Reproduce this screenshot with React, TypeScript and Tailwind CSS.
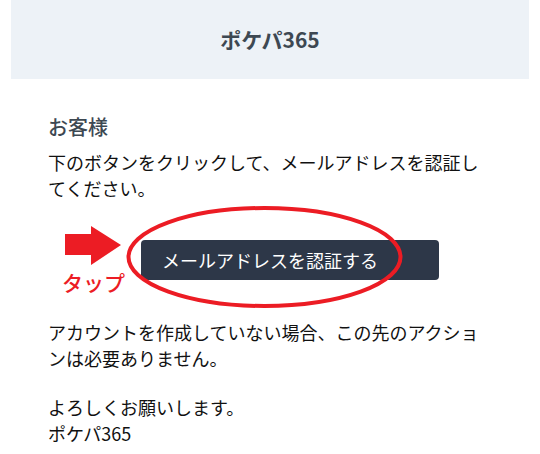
// App.tsx — email verification mail preview with red "tap" annotation.
const FONT = { fontFamily: '"Noto Sans CJK JP", "Noto Sans", sans-serif' };

function TapMark() {
  return (
    <>
      <svg className="absolute left-0 top-0 pointer-events-none" width={540} height={454}>
        <polygon points="65,234 91,234 91,226 121,245 91,265 91,255 65,255" fill="#ec1c24" />
        <ellipse cx={264.5} cy={257} rx={136} ry={49} fill="none" stroke="#ec1c24" strokeWidth={4} />
      </svg>
      <span className="absolute left-[62px] top-[268px] text-[21px] font-medium leading-[28px] text-[#ec1c24]">
        タップ
      </span>
    </>
  );
}

export default function App() {
  return (
    <div className="relative h-[454px] w-[540px] overflow-hidden bg-white" style={FONT}>
      <header className="mx-[11px] flex h-[79px] items-center justify-center bg-[#edf2f7]">
        <h1 className="text-[21px] font-bold text-[#3d4852]">ポケパ365</h1>
      </header>

      <main className="px-[48px] pt-[34px]">
        <h2 className="text-[20px] font-medium leading-[28px] text-[#3d4852]">お客様</h2>
        <p className="mt-[8px] text-[18px] leading-[26px] text-[#111]">
          下のボタンをクリックして、メールアドレスを認証してください。
        </p>

        <div className="mt-[39px] flex pl-[93px]">
          <button className="h-[40px] w-[298px] rounded-[4px] bg-[#2d3748] pl-[21px] text-left text-[18px] text-white">
            メールアドレスを認証する
          </button>
        </div>

        <p className="mt-[39px] text-[18px] leading-[26px] text-[#111]">
          アカウントを作成していない場合、この先のアクションは必要ありません。
        </p>
        <p className="mt-[23px] text-[18px] leading-[26px] text-[#111]">
          よろしくお願いします。
          <br />
          ポケパ365
        </p>
      </main>

      <TapMark />
    </div>
  );
}
